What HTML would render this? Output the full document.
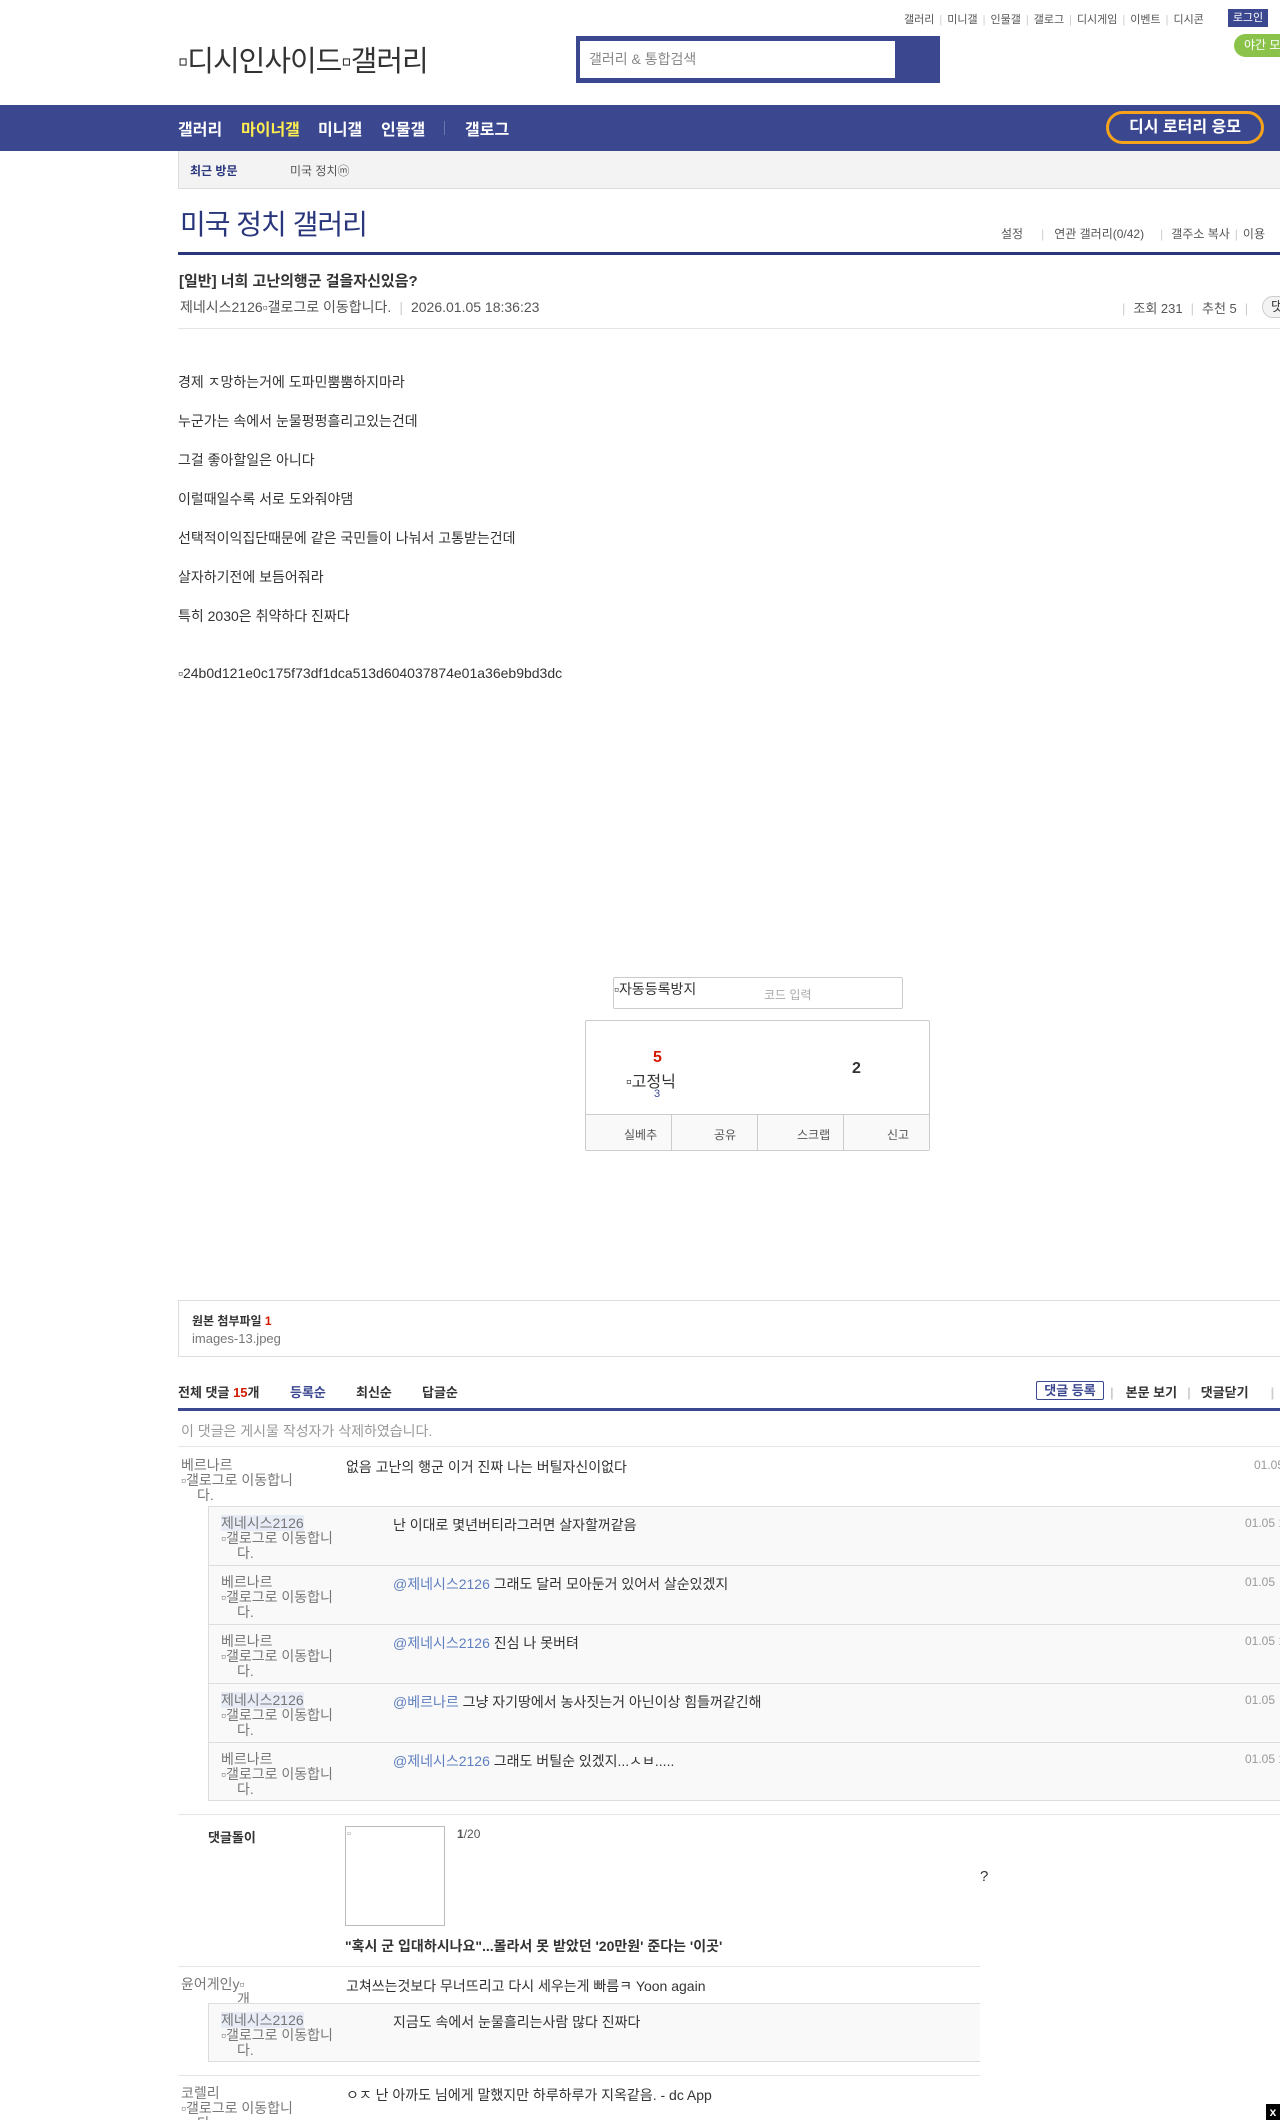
<!DOCTYPE html>
<html><head><meta charset="utf-8">
<style>
*{margin:0;padding:0;box-sizing:border-box}
html,body{width:1280px;height:2120px;overflow:hidden;background:#fff}
body{position:relative;font-family:"Liberation Sans","Noto Sans CJK KR",sans-serif;font-size:14px;color:#333}
.a{position:absolute;white-space:nowrap}
.sep{color:#ccc;margin:0 5px}
.blue{color:#5f7fbf}
.hl{background:#e8ecf7;color:#777}
.ni{position:absolute;font-size:14px;color:#777;line-height:15px}
.ni span{display:block}
</style></head><body>

<div class="a" style="top:11px;left:904px;font-size:11px;color:#555">갤러리<span class="sep">|</span>미니갤<span class="sep">|</span>인물갤<span class="sep">|</span>갤로그<span class="sep">|</span>디시게임<span class="sep">|</span>이벤트<span class="sep">|</span>디시콘</div>
<div class="a" style="top:9px;left:1228px;width:40px;height:18px;background:#3b4890;color:#fff;font-size:11px;text-align:center;line-height:18px">로그인</div>
<div class="a" style="top:34px;left:1234px;width:60px;height:23px;background:#8bc34a;border-radius:12px;color:#fff;font-size:12px;line-height:23px;padding-left:10px">야간 모드</div>

<div class="a" style="top:38px;left:178px;font-size:29px;color:#333;letter-spacing:-1px">▫디시인사이드▫갤러리</div>

<div class="a" style="top:36px;left:576px;width:364px;height:47px;background:#3b4890"></div>
<div class="a" style="top:41px;left:580px;width:315px;height:37px;background:#fff;color:#888;font-size:14px;line-height:37px;padding-left:9px">갤러리 &amp; 통합검색</div>

<div class="a" style="top:105px;left:0;width:1280px;height:46px;background:#3b4890"></div>
<div class="a" style="top:116px;left:178px;font-size:16px;font-weight:bold;color:#fff">갤러리</div>
<div class="a" style="top:116px;left:241px;font-size:16px;font-weight:bold;color:#ffed4d">마이너갤</div>
<div class="a" style="top:116px;left:318px;font-size:16px;font-weight:bold;color:#fff">미니갤</div>
<div class="a" style="top:116px;left:381px;font-size:16px;font-weight:bold;color:#fff">인물갤</div>
<div class="a" style="top:121px;left:444px;width:1px;height:14px;background:#6a76b0"></div>
<div class="a" style="top:116px;left:465px;font-size:16px;font-weight:bold;color:#fff">갤로그</div>
<div class="a" style="top:111px;left:1106px;width:158px;height:33px;border:3px solid #f7a21b;border-radius:17px;color:#fff;font-size:16px;font-weight:bold;text-align:center;line-height:27px">디시 로터리 응모</div>

<div class="a" style="top:151px;left:178px;width:1110px;height:38px;background:#f3f3f3;border:1px solid #ddd;border-top:none"></div>
<div class="a" style="top:162px;left:190px;font-size:12px;font-weight:bold;color:#29367c">최근 방문</div>
<div class="a" style="top:162px;left:290px;font-size:12px;color:#555">미국 정치ⓜ</div>

<div class="a" style="top:203px;left:180px;font-size:28px;color:#29367c;letter-spacing:-1px">미국 정치 갤러리</div>
<div class="a" style="top:225px;left:1001px;font-size:12px;color:#555">설정<span class="sep" style="margin:0 10px 0 18px">|</span>연관 갤러리(0/42)<span class="sep" style="margin:0 8px 0 16px">|</span>갤주소 복사<span class="sep">|</span>이용</div>
<div class="a" style="top:252px;left:178px;width:1110px;height:3px;background:#29367c"></div>

<div class="a" style="top:270px;left:179px;font-size:15px;font-weight:bold;color:#333">[일반] 너희 고난의행군 걸을자신있음?</div>
<div class="a" style="top:297px;left:180px;font-size:14px;color:#555">제네시스2126▫갤로그로 이동합니다.<span class="sep" style="margin:0 8px">|</span>2026.01.05 18:36:23</div>
<div class="a" style="top:298px;left:1122px;font-size:13px;color:#555"><span class="sep" style="margin:0 8px 0 0">|</span>조회 231<span class="sep" style="margin:0 8px">|</span>추천 5<span class="sep" style="margin:0 8px">|</span></div>
<div class="a" style="top:296px;left:1262px;width:30px;height:22px;border:1px solid #ccc;border-radius:11px;background:#f3f3f3;font-size:13px;padding-left:8px;line-height:20px">댓</div>
<div class="a" style="top:328px;left:178px;width:1110px;height:1px;background:#e5e5e5"></div>

<div class="a" style="top:372px;left:178px">경제 ㅈ망하는거에 도파민뿜뿜하지마라</div>
<div class="a" style="top:411px;left:178px">누군가는 속에서 눈물펑펑흘리고있는건데</div>
<div class="a" style="top:450px;left:178px">그걸 좋아할일은 아니다</div>
<div class="a" style="top:489px;left:178px">이럴때일수록 서로 도와줘야댐</div>
<div class="a" style="top:528px;left:178px">선택적이익집단때문에 같은 국민들이 나눠서 고통받는건데</div>
<div class="a" style="top:567px;left:178px">살자하기전에 보듬어줘라</div>
<div class="a" style="top:606px;left:178px">특히 2030은 취약하다 진짜다</div>
<div class="a" style="top:665px;left:178px">▫24b0d121e0c175f73df1dca513d604037874e01a36eb9bd3dc</div>

<div class="a" style="top:977px;left:613px;width:290px;height:32px;border:1px solid #ccc;border-radius:2px"></div>
<div class="a" style="top:979px;left:614px">▫자동등록방지</div>
<div class="a" style="top:986px;left:764px;font-size:12px;color:#aaa">코드 입력</div>

<div class="a" style="top:1020px;left:585px;width:345px;height:131px;border:1px solid #ccc;border-radius:2px"></div>
<div class="a" style="top:1049px;left:653px;font-size:16px;font-weight:bold;color:#d31900">5</div>
<div class="a" style="top:1068px;left:626px;font-size:16px">▫고정닉</div>
<div class="a" style="top:1088px;left:654px;font-size:11px;color:#3b4890">3</div>
<div class="a" style="top:1060px;left:852px;font-size:16px;font-weight:bold">2</div>
<div class="a" style="top:1114px;left:586px;width:343px;height:36px;background:#f9f9f9;border-top:1px solid #ccc"></div>
<div class="a" style="top:1114px;left:671px;width:1px;height:36px;background:#ccc"></div>
<div class="a" style="top:1114px;left:757px;width:1px;height:36px;background:#ccc"></div>
<div class="a" style="top:1114px;left:843px;width:1px;height:36px;background:#ccc"></div>
<div class="a" style="top:1126px;left:624px;font-size:12px;color:#555">실베추</div>
<div class="a" style="top:1126px;left:714px;font-size:12px;color:#555">공유</div>
<div class="a" style="top:1126px;left:797px;font-size:12px;color:#555">스크랩</div>
<div class="a" style="top:1126px;left:887px;font-size:12px;color:#555">신고</div>

<div class="a" style="top:1300px;left:178px;width:1110px;height:57px;border:1px solid #ddd"></div>
<div class="a" style="top:1312px;left:192px;font-size:12px;font-weight:bold">원본 첨부파일 <span style="color:#d31900">1</span></div>
<div class="a" style="top:1331px;left:192px;font-size:13px;color:#777">images-13.jpeg</div>

<div class="a" style="top:1382px;left:178px;font-size:13px;font-weight:bold">전체 댓글 <span style="color:#d31900">15</span>개</div>
<div class="a" style="top:1382px;left:290px;font-size:13px;font-weight:bold;color:#3b4890">등록순</div>
<div class="a" style="top:1382px;left:356px;font-size:13px;font-weight:bold">최신순</div>
<div class="a" style="top:1382px;left:422px;font-size:13px;font-weight:bold">답글순</div>
<div class="a" style="top:1381px;left:1036px;width:68px;height:19px;border:1px solid #3b4890;border-radius:2px;font-size:13px;font-weight:bold;color:#3b4890;text-align:center;line-height:17px">댓글 등록</div>
<div class="a" style="top:1382px;left:1110px;font-size:13px;font-weight:bold"><span class="sep" style="margin:0 12px 0 0">|</span>본문 보기<span class="sep" style="margin:0 10px">|</span>댓글닫기<span class="sep" style="margin:0 12px 0 22px">|</span></div>
<div class="a" style="top:1408px;left:178px;width:1110px;height:3px;background:#3b4890"></div>

<div class="a" style="top:1421px;left:181px;color:#999">이 댓글은 게시물 작성자가 삭제하였습니다.</div>
<div class="a" style="top:1446px;left:178px;width:1110px;height:1px;background:#e5e5e5"></div>

<div class="ni" style="top:1458px;left:181px"><span>베르나르</span><span>▫갤로그로 이동합니</span><span style="padding-left:16px">다.</span></div>
<div class="a" style="top:1457px;left:346px">없음 고난의 행군 이거 진짜 나는 버틸자신이없다</div>
<div class="a" style="top:1458px;left:1254px;font-size:12px;color:#999">01.05</div>

<div class="a" style="top:1506px;left:208px;width:1080px;height:295px;background:#f9f9f9;border:1px solid #ddd;border-right:none"></div>
<div class="a" style="top:1565px;left:209px;width:1079px;height:1px;background:#ddd"></div>
<div class="a" style="top:1624px;left:209px;width:1079px;height:1px;background:#ddd"></div>
<div class="a" style="top:1683px;left:209px;width:1079px;height:1px;background:#ddd"></div>
<div class="a" style="top:1742px;left:209px;width:1079px;height:1px;background:#ddd"></div>

<div class="ni" style="top:1516px;left:221px"><span><i class="hl" style="font-style:normal">제네시스2126</i></span><span>▫갤로그로 이동합니</span><span style="padding-left:16px">다.</span></div>
<div class="a" style="top:1515px;left:393px">난 이대로 몇년버티라그러면 살자할꺼같음</div>
<div class="a" style="top:1516px;left:1245px;font-size:12px;color:#999">01.05 1</div>

<div class="ni" style="top:1575px;left:221px"><span>베르나르</span><span>▫갤로그로 이동합니</span><span style="padding-left:16px">다.</span></div>
<div class="a" style="top:1574px;left:393px"><span class="blue">@제네시스2126</span> 그래도 달러 모아둔거 있어서 살순있겠지</div>
<div class="a" style="top:1575px;left:1245px;font-size:12px;color:#999">01.05</div>

<div class="ni" style="top:1634px;left:221px"><span>베르나르</span><span>▫갤로그로 이동합니</span><span style="padding-left:16px">다.</span></div>
<div class="a" style="top:1633px;left:393px"><span class="blue">@제네시스2126</span> 진심 나 못버텨</div>
<div class="a" style="top:1634px;left:1245px;font-size:12px;color:#999">01.05 1</div>

<div class="ni" style="top:1693px;left:221px"><span><i class="hl" style="font-style:normal">제네시스2126</i></span><span>▫갤로그로 이동합니</span><span style="padding-left:16px">다.</span></div>
<div class="a" style="top:1692px;left:393px"><span class="blue">@베르나르</span> 그냥 자기땅에서 농사짓는거 아닌이상 힘들꺼같긴해</div>
<div class="a" style="top:1693px;left:1245px;font-size:12px;color:#999">01.05</div>

<div class="ni" style="top:1752px;left:221px"><span>베르나르</span><span>▫갤로그로 이동합니</span><span style="padding-left:16px">다.</span></div>
<div class="a" style="top:1751px;left:393px"><span class="blue">@제네시스2126</span> 그래도 버틸순 있겠지...ㅅㅂ.....</div>
<div class="a" style="top:1752px;left:1245px;font-size:12px;color:#999">01.05 1</div>

<div class="a" style="top:1814px;left:178px;width:1110px;height:1px;background:#e5e5e5"></div>

<div class="a" style="top:1827px;left:208px;font-size:13px;font-weight:bold">댓글돌이</div>
<div class="a" style="top:1826px;left:345px;width:100px;height:100px;border:1px solid #bbb"></div>
<div class="a" style="top:1828px;left:347px;font-size:11px;color:#999">▫</div>
<div class="a" style="top:1827px;left:457px;font-size:12px;color:#555"><b>1</b>/20</div>
<div class="a" style="top:1868px;left:980px;font-size:15px">?</div>
<div class="a" style="top:1936px;left:345px;font-size:14px;font-weight:bold">"혹시 군 입대하시나요"...몰라서 못 받았던 '20만원' 준다는 '이곳'</div>
<div class="a" style="top:1966px;left:178px;width:802px;height:1px;background:#e5e5e5"></div>

<div class="ni" style="top:1977px;left:181px"><span>윤어게인y▫</span><span style="padding-left:56px">개</span></div>
<div class="a" style="top:1976px;left:346px">고쳐쓰는것보다 무너뜨리고 다시 세우는게 빠름ㅋ Yoon again</div>

<div class="a" style="top:2003px;left:208px;width:772px;height:59px;background:#f9f9f9;border:1px solid #ddd;border-right:none"></div>
<div class="ni" style="top:2013px;left:221px"><span><i class="hl" style="font-style:normal">제네시스2126</i></span><span>▫갤로그로 이동합니</span><span style="padding-left:16px">다.</span></div>
<div class="a" style="top:2012px;left:393px">지금도 속에서 눈물흘리는사람 많다 진짜다</div>

<div class="a" style="top:2075px;left:178px;width:802px;height:1px;background:#e5e5e5"></div>
<div class="ni" style="top:2086px;left:181px"><span>코렐리</span><span>▫갤로그로 이동합니</span><span style="padding-left:16px">다.</span></div>
<div class="a" style="top:2085px;left:346px">ㅇㅈ 난 아까도 님에게 말했지만 하루하루가 지옥같음. - dc App</div>

<div class="a" style="top:2104px;left:1266px;width:14px;height:16px;background:#000;color:#fff;font-size:12px;font-weight:bold;text-align:center;line-height:16px">x</div>
</body></html>
